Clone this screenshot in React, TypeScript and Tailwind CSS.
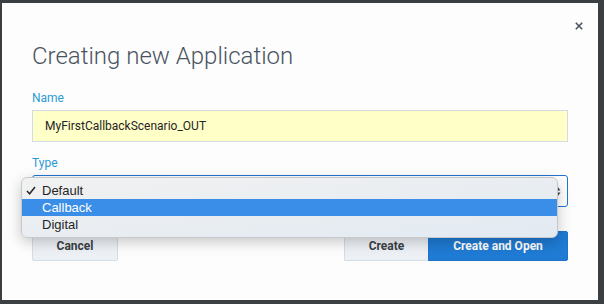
import React, { useState } from 'react';

const options = ['Default', 'Callback', 'Digital'];

const CreateAppDialog: React.FC = () => {
  const [name, setName] = useState('MyFirstCallbackScenario_OUT');
  const [type] = useState('Default');
  const [hovered] = useState('Callback');

  return (
    <div className="relative flex flex-1 flex-col bg-[#fdfdfd] px-[30px] font-['Roboto',sans-serif]">
      <button
        type="button"
        className="absolute right-[14px] top-[18px] flex h-[10px] w-[10px] items-center justify-center text-[#4b5360]"
      >
        <svg width="8" height="8" viewBox="0 0 8 8" fill="none">
          <path d="M0.8 0.8L7.2 7.2M7.2 0.8L0.8 7.2" stroke="currentColor" strokeWidth="1.6" />
        </svg>
      </button>

      <h2 className="mt-[38px] text-[24px] font-light leading-[30px] text-[#4a5461]">
        Creating new Application
      </h2>

      <label className="mt-[19px] text-[12px] leading-[16px] text-[#2b9ad6]" htmlFor="name">
        Name
      </label>
      <input
        id="name"
        value={name}
        onChange={e => setName(e.target.value)}
        className="mt-[4px] h-[32px] w-full border border-[#d3dce5] bg-[#ffffc8] px-[12px] text-[12px] text-[#1f2326] outline-none"
      />

      <label className="mt-[13px] text-[12px] leading-[16px] text-[#2b9ad6]" htmlFor="type">
        Type
      </label>
      <div className="relative mt-[4px]">
        {/* select box, its value is hidden under the open list */}
        <div
          id="type"
          aria-label={type}
          className="flex h-[32px] w-full items-center justify-end rounded-[3px] border border-[#2176d4] bg-white pr-[6px]"
        >
          <svg width="7" height="11" viewBox="0 0 7 11">
            <path d="M3.5 0.5L6.5 4.5H0.5Z" fill="#3c3f43" />
            <path d="M3.5 10.5L6.5 6.5H0.5Z" fill="#3c3f43" />
          </svg>
        </div>

        <ul className="absolute left-[-11px] top-[2px] w-[537px] rounded-[6px] border border-[#c6c8cc] bg-gradient-to-br from-[#f1f1f1] to-[#e2eaf2] py-[4px] font-['Liberation_Sans',sans-serif] text-[13px] leading-[17px] text-[#262626] shadow-[0_4px_14px_rgba(0,0,0,0.22)]">
          {options.map(opt => (
            <li
              key={opt}
              className={`relative h-[17px] pl-[20px] ${opt === hovered ? 'bg-[#3b8ee8] text-white' : ''}`}
            >
              {opt === type && (
                <svg className="absolute left-[4px] top-[4px]" width="10" height="9" viewBox="0 0 10 9" fill="none">
                  <path d="M1 5L3.6 7.8L9 1" stroke="#262626" strokeWidth="1.5" />
                </svg>
              )}
              {opt}
            </li>
          ))}
        </ul>
      </div>

      <div className="mt-[24px] flex items-center justify-between">
        <button
          type="button"
          className="h-[30px] w-[86px] rounded-[2px] border border-[#d4dce4] bg-[#edf1f5] text-[12px] font-bold text-[#3a3f45]"
        >
          Cancel
        </button>
        <div className="flex">
          <button
            type="button"
            className="h-[30px] w-[84px] rounded-l-[2px] border border-r-0 border-[#d4dce4] bg-[#edf1f5] text-[12px] font-bold text-[#3a3f45]"
          >
            Create
          </button>
          <button
            type="button"
            className="h-[30px] w-[140px] rounded-r-[2px] border border-[#1f74c9] bg-[#1f7bd3] text-[12px] font-bold text-white"
          >
            Create and Open
          </button>
        </div>
      </div>
    </div>
  );
};

export default function App() {
  return (
    <div className="flex h-[304px] w-[604px] bg-[#3c3f42] pb-[4px] pl-[2px] pr-[6px] pt-[3px]">
      <CreateAppDialog />
    </div>
  );
}
